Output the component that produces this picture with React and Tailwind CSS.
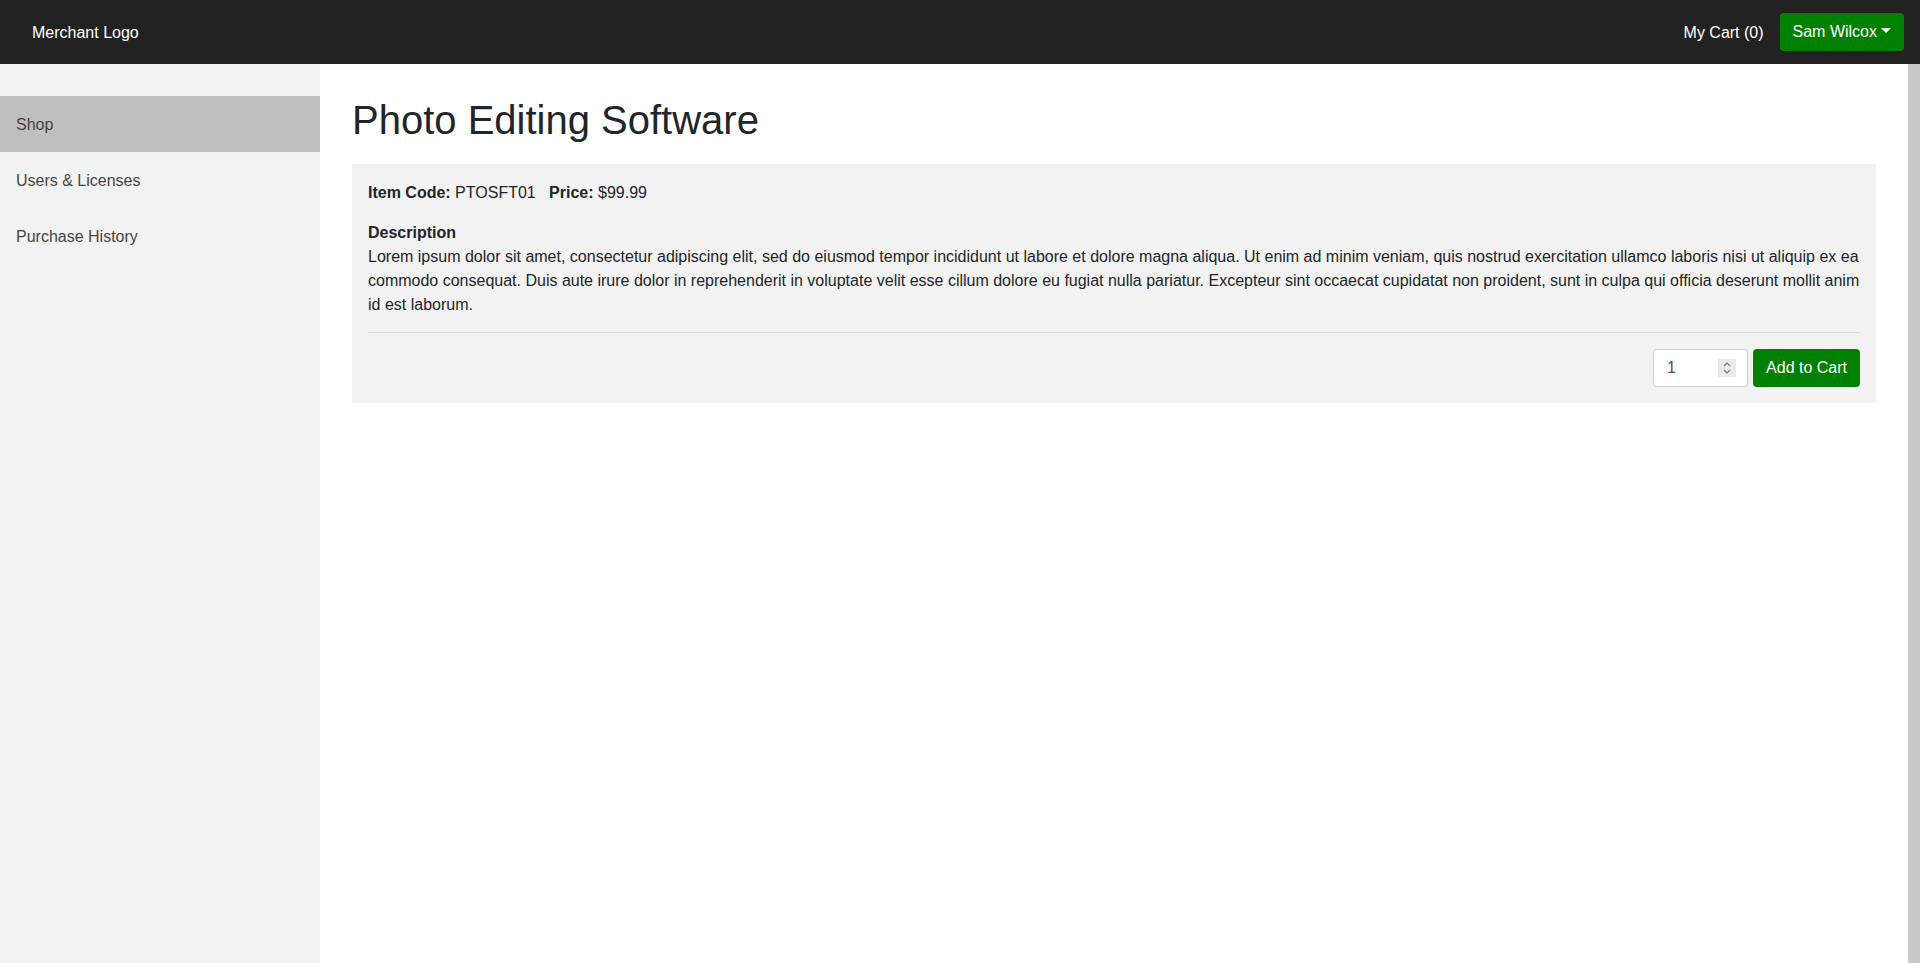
export default function App() {
  return (
    <div className="h-screen flex flex-col overflow-hidden text-[16px] leading-6 text-[#212529]" style={{ fontFamily: '"Liberation Sans", Arial, sans-serif' }}>
      <header className="h-16 shrink-0 bg-[#222222] flex items-center justify-between pl-8 pr-4">
        <div className="text-white pt-px">Merchant Logo</div>
        <div className="flex items-center gap-4">
          <a className="text-white pt-px">My Cart (0)</a>
          <button className="h-[38px] px-[13px] rounded bg-[#008000] text-white flex items-center">
            Sam Wilcox
            <span className="ml-[4px] w-0 h-0 border-t-[5px] border-t-white border-l-[5px] border-l-transparent border-r-[5px] border-r-transparent mb-[4px]"></span>
          </button>
        </div>
      </header>
      <div className="flex flex-1 min-h-0">
        <aside className="w-80 shrink-0 bg-[#f2f2f2] pt-8 text-[#444444]">
          <div className="h-14 flex items-center px-4 pt-px bg-[#bfbfbf]">Shop</div>
          <div className="h-14 flex items-center px-4 pt-px">Users &amp; Licenses</div>
          <div className="h-14 flex items-center px-4 pt-px">Purchase History</div>
        </aside>
        <main className="flex-1 bg-white px-8 pt-8">
          <h1 className="text-[40px] leading-[48px] mb-5 text-[#212529]">Photo Editing Software</h1>
          <div className="bg-[#f2f2f2] px-4 pt-[17px] pb-4">
            <div>
              <b>Item Code:</b> PTOSFT01&nbsp;&nbsp; <b>Price:</b> $99.99
            </div>
            <div className="mt-4 font-bold">Description</div>
            <p>
              Lorem ipsum dolor sit amet, consectetur adipiscing elit, sed do eiusmod tempor incididunt ut labore et dolore magna aliqua. Ut enim ad minim veniam, quis nostrud exercitation ullamco laboris nisi ut aliquip ex ea commodo consequat. Duis aute irure dolor in reprehenderit in voluptate velit esse cillum dolore eu fugiat nulla pariatur. Excepteur sint occaecat cupidatat non proident, sunt in culpa qui officia deserunt mollit anim id est laborum.
            </p>
            <div className="mt-[15px] border-t border-[#d9d9d9]"></div>
            <div className="mt-4 flex justify-end gap-[5px]">
              <div className="relative">
                <input type="number" defaultValue={1} className="w-[95px] h-[38px] bg-white border border-[#ced4da] rounded pl-[13px] pr-2 text-[#495057] [appearance:textfield] [&::-webkit-inner-spin-button]:appearance-none" style={{ fontFamily: '"Liberation Sans", Arial, sans-serif' }} />
                <div className="absolute left-[65px] top-[10px] w-[18px] h-[18px] bg-[#e9e9ed] flex items-center justify-center pointer-events-none">
                  <svg width="10" height="14" viewBox="0 0 10 14" fill="none" stroke="#7a7a80" strokeWidth="1.2">
                    <path d="M2 5 L5 2 L8 5" />
                    <path d="M2 9 L5 12 L8 9" />
                  </svg>
                </div>
              </div>
              <button className="h-[38px] px-[13px] rounded bg-[#008000] text-white">Add to Cart</button>
            </div>
          </div>
        </main>
        <div className="w-3 shrink-0 bg-[#c8c8c8]"></div>
      </div>
    </div>
  );
}
